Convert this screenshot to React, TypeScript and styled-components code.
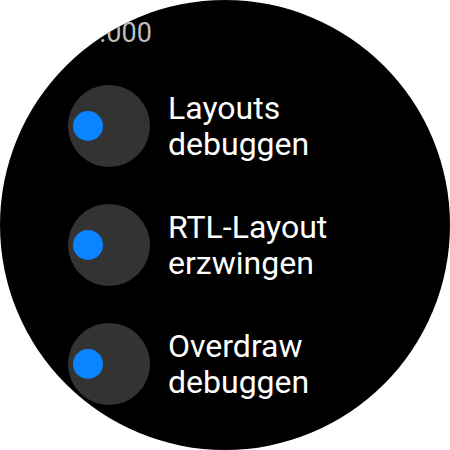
import React from 'react'
import styled, { createGlobalStyle } from 'styled-components'

const GlobalStyle = createGlobalStyle`
  html, body {
    margin: 0;
    padding: 0;
    background: #ffffff;
  }
  body {
    font-family: Roboto, "Noto Sans", sans-serif;
  }
`

type ToggleItem = {
  lines: [string, string]
  checked: boolean
}

const items: ToggleItem[] = [
  { lines: ['Layouts', 'debuggen'], checked: false },
  { lines: ['RTL-Layout', 'erzwingen'], checked: false },
  { lines: ['Overdraw', 'debuggen'], checked: false },
]

export default function App() {
  return (
    <>
      <GlobalStyle />
      <Screen>
        <List>
          <Header>
            <Title>
              Animator-
              <br />
              dauerskalierung
            </Title>
            <Value>1.000</Value>
          </Header>

          {items.map((item) => (
            <Row key={item.lines.join(' ')}>
              <Toggle $checked={item.checked}>
                <Knob />
              </Toggle>
              <Label>
                {item.lines[0]}
                <br />
                {item.lines[1]}
              </Label>
            </Row>
          ))}
        </List>
      </Screen>
    </>
  )
}

const Screen = styled.div`
  width: 450px;
  height: 450px;
  border-radius: 50%;
  background: #000000;
  overflow: hidden;
`

// the list is scrolled: the header item sits partly above the screen
const List = styled.div`
  display: flex;
  flex-direction: column;
  margin-top: -65px;
`

const Header = styled.div`
  display: flex;
  flex-direction: column;
  padding: 0 0 17px 84px;
`

const Title = styled.div`
  font-size: 32px;
  line-height: 36px;
  color: #ffffff;
`

const Value = styled.div`
  margin-top: 10px;
  font-size: 27px;
  line-height: 32px;
  color: #bdbdbd;
`

const Row = styled.div`
  display: flex;
  align-items: center;
  gap: 18px;
  height: 119px;
  padding-left: 68px;
`

const Toggle = styled.div<{ $checked: boolean }>`
  display: flex;
  align-items: center;
  justify-content: ${({ $checked }) => ($checked ? 'flex-end' : 'flex-start')};
  flex-shrink: 0;
  box-sizing: border-box;
  width: 82px;
  height: 82px;
  padding: 0 5px;
  border-radius: 50%;
  background: #333333;
`

const Knob = styled.div`
  width: 30px;
  height: 30px;
  border-radius: 50%;
  background: #0a84ff;
`

const Label = styled.div`
  font-size: 32px;
  line-height: 36px;
  color: #ffffff;
`
